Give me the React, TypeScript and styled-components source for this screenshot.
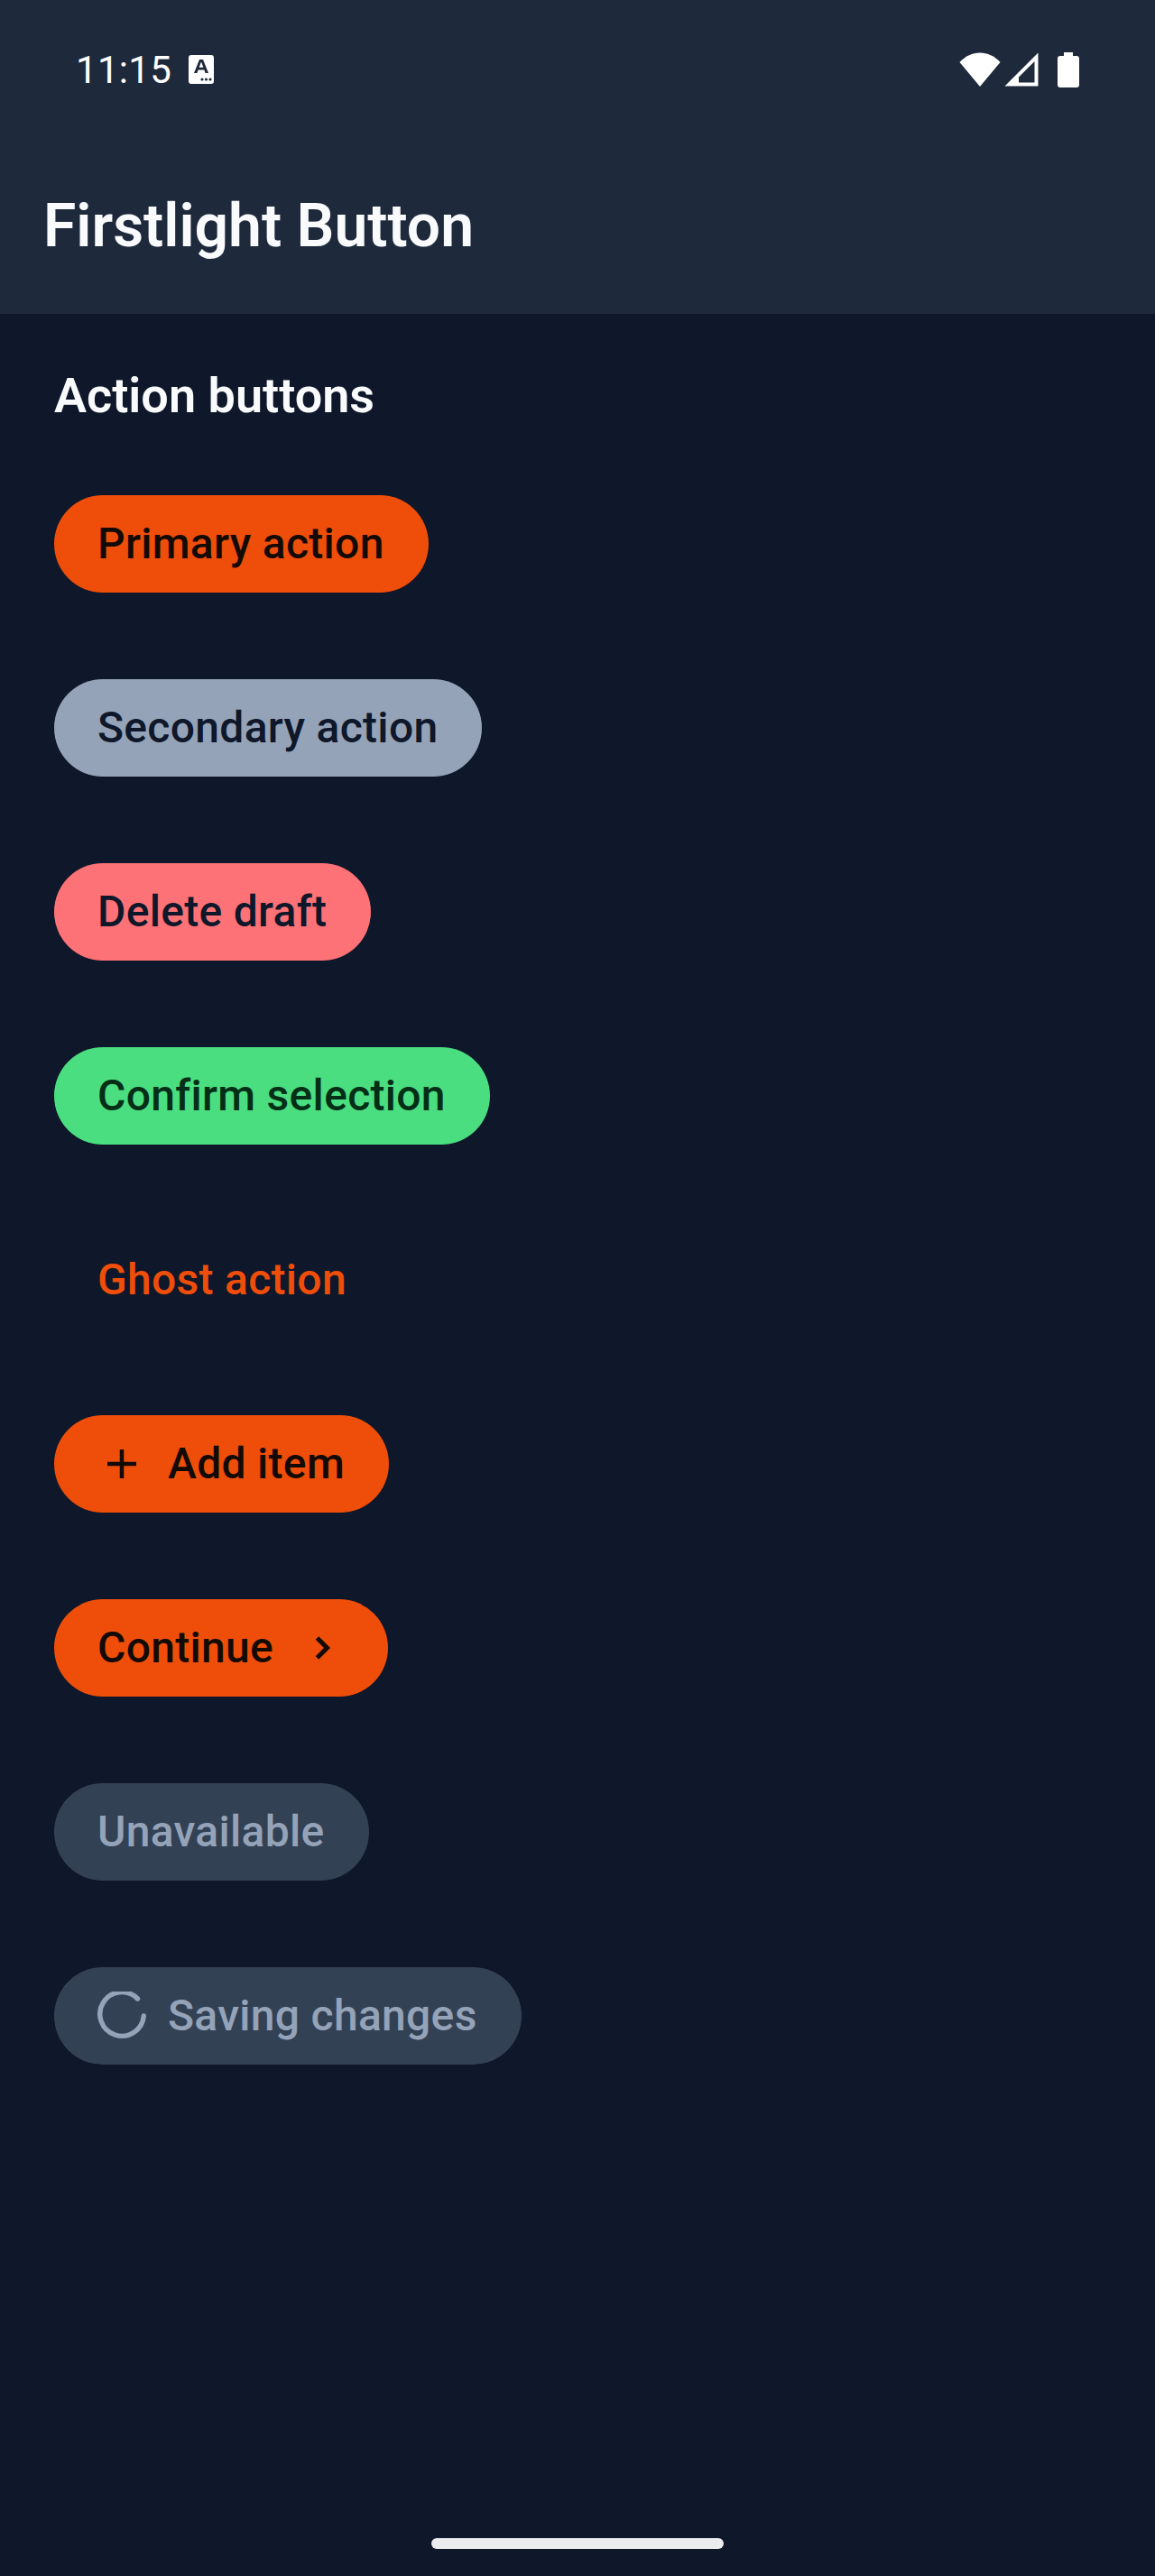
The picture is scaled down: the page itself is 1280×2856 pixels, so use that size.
import styled, { createGlobalStyle } from 'styled-components';

const GlobalStyle = createGlobalStyle`
  html, body {
    margin: 0;
    padding: 0;
    background: #0f172a;
  }
  * {
    box-sizing: border-box;
  }
`;

type Tone = 'primary' | 'secondary' | 'danger' | 'success' | 'ghost' | 'disabled';

const Tones: Record<Tone, { bg: string; fg: string }> = {
  primary: { bg: '#ee4e0a', fg: '#140a05' },
  secondary: { bg: '#94a3b8', fg: '#0f172a' },
  danger: { bg: '#fc7276', fg: '#0f172a' },
  success: { bg: '#4ade80', fg: '#052e16' },
  ghost: { bg: 'transparent', fg: '#ee4e0a' },
  disabled: { bg: '#334155', fg: '#94a3b8' },
};

const Page = styled.div`
  width: 1280px;
  height: 2856px;
  display: flex;
  flex-direction: column;
  background: #0f172a;
  font-family: Roboto, "Liberation Sans", sans-serif;
`;

const Header = styled.header`
  height: 348px;
  flex: none;
  background: #1e293b;
  display: flex;
  flex-direction: column;
`;

const StatusBar = styled.div`
  height: 154px;
  flex: none;
  padding: 0 84px;
  display: flex;
  align-items: center;
  justify-content: space-between;
`;

const StatusLeft = styled.div`
  display: flex;
  align-items: center;
  gap: 19px;
`;

const Clock = styled.span`
  font-size: 42px;
  font-weight: 400;
  letter-spacing: 0.3px;
  color: #ffffff;
`;

const StatusRight = styled.div`
  display: flex;
  align-items: center;
  gap: 4px;
`;

const StatusSpacer = styled.span`
  width: 13px;
`;

const TitleBar = styled.div`
  flex: 1;
  padding-left: 48px;
  display: flex;
  align-items: center;
`;

const Title = styled.h1`
  margin: 0;
  font-size: 66px;
  line-height: 78px;
  font-weight: 570;
  color: #f8fafc;
`;

const Content = styled.main`
  flex: 1;
  padding: 59px 60px 0;
  display: flex;
  flex-direction: column;
  align-items: flex-start;
`;

const SectionTitle = styled.h2`
  margin: 0 0 78px;
  font-size: 54px;
  line-height: 64px;
  font-weight: 570;
  color: #f8fafc;
`;

const ButtonList = styled.div`
  display: flex;
  flex-direction: column;
  align-items: flex-start;
  gap: 96px;
`;

const ActionButton = styled.button<{ $tone: Tone }>`
  height: 108px;
  padding: 0 49px 2px 48px;
  display: flex;
  align-items: center;
  gap: 24px;
  border: none;
  border-radius: 54px;
  font-family: inherit;
  font-size: 48px;
  font-weight: 470;
  letter-spacing: 0.3px;
  background: ${(p) => Tones[p.$tone].bg};
  color: ${(p) => Tones[p.$tone].fg};

  svg {
    margin-top: 2px;
  }
`;

const HomeBar = styled.div`
  flex: none;
  height: 42px;
  display: flex;
  justify-content: center;
`;

const HomeHandle = styled.div`
  width: 324px;
  height: 12px;
  border-radius: 6px;
  background: #eaecee;
`;

const KeyboardIcon = () => (
  <svg width="28" height="32" viewBox="0 0 28 32">
    <rect x="0" y="0" width="28" height="32" rx="3" fill="#ffffff" />
    <path d="M6 20 L12 5 H16 L22 20 H18.6 L17.4 16.6 H10.6 L9.4 20 Z M11.6 13.8 H16.4 L14 7.6 Z" fill="#1e293b" fillRule="evenodd" />
    <circle cx="15" cy="27" r="1.6" fill="#1e293b" />
    <circle cx="19.5" cy="27" r="1.6" fill="#1e293b" />
    <circle cx="24" cy="27" r="1.6" fill="#1e293b" />
  </svg>
);

const WifiIcon = () => (
  <svg width="46" height="38" viewBox="0 0 46 38">
    <path d="M0.5 11 C7 4 14.5 0.5 23 0.5 C31.5 0.5 39 4 45.5 11 L23 38 Z" fill="#ffffff" />
  </svg>
);

const SignalIcon = () => (
  <svg width="38" height="38" viewBox="0 0 38 38">
    <path d="M37.5 0.5 V37.5 H0.5 Z M33.5 10 L16 27.5 V33.5 H33.5 Z" fill="#ffffff" fillRule="evenodd" />
  </svg>
);

const BatteryIcon = () => (
  <svg width="24" height="39" viewBox="0 0 24 39">
    <path d="M7 0 H17 V4 H21 Q24 4 24 7 V36 Q24 39 21 39 H3 Q0 39 0 36 V7 Q0 4 3 4 H7 Z" fill="#ffffff" />
  </svg>
);

const PlusIcon = () => (
  <svg width="54" height="54" viewBox="0 0 54 54" fill="none" stroke="currentColor" strokeWidth="4.5">
    <path d="M11 27 H43 M27 11 V43" />
  </svg>
);

const ChevronIcon = () => (
  <svg width="54" height="54" viewBox="0 0 54 54" fill="none" stroke="currentColor" strokeWidth="5">
    <path d="M24.5 16 L35.5 27 L24.5 38" />
  </svg>
);

const Spinner = () => (
  <svg width="54" height="54" viewBox="0 0 54 54" fill="none" stroke="currentColor" strokeWidth="5.4" strokeLinecap="round">
    <path d="M44.5 8 A24.3 24.3 0 1 0 51.3 27" />
  </svg>
);

const App = () => {
  return (
    <Page>
      <GlobalStyle />
      <Header>
        <StatusBar>
          <StatusLeft>
            <Clock>11:15</Clock>
            <KeyboardIcon />
          </StatusLeft>
          <StatusRight>
            <WifiIcon />
            <SignalIcon />
            <StatusSpacer />
            <BatteryIcon />
          </StatusRight>
        </StatusBar>
        <TitleBar>
          <Title>Firstlight Button</Title>
        </TitleBar>
      </Header>
      <Content>
        <SectionTitle>Action buttons</SectionTitle>
        <ButtonList>
          <ActionButton $tone="primary">Primary action</ActionButton>
          <ActionButton $tone="secondary">Secondary action</ActionButton>
          <ActionButton $tone="danger">Delete draft</ActionButton>
          <ActionButton $tone="success">Confirm selection</ActionButton>
          <ActionButton $tone="ghost">Ghost action</ActionButton>
          <ActionButton $tone="primary">
            <PlusIcon />
            Add item
          </ActionButton>
          <ActionButton $tone="primary">
            Continue
            <ChevronIcon />
          </ActionButton>
          <ActionButton $tone="disabled">Unavailable</ActionButton>
          <ActionButton $tone="disabled">
            <Spinner />
            Saving changes
          </ActionButton>
        </ButtonList>
      </Content>
      <HomeBar>
        <HomeHandle />
      </HomeBar>
    </Page>
  );
};

export default App;
